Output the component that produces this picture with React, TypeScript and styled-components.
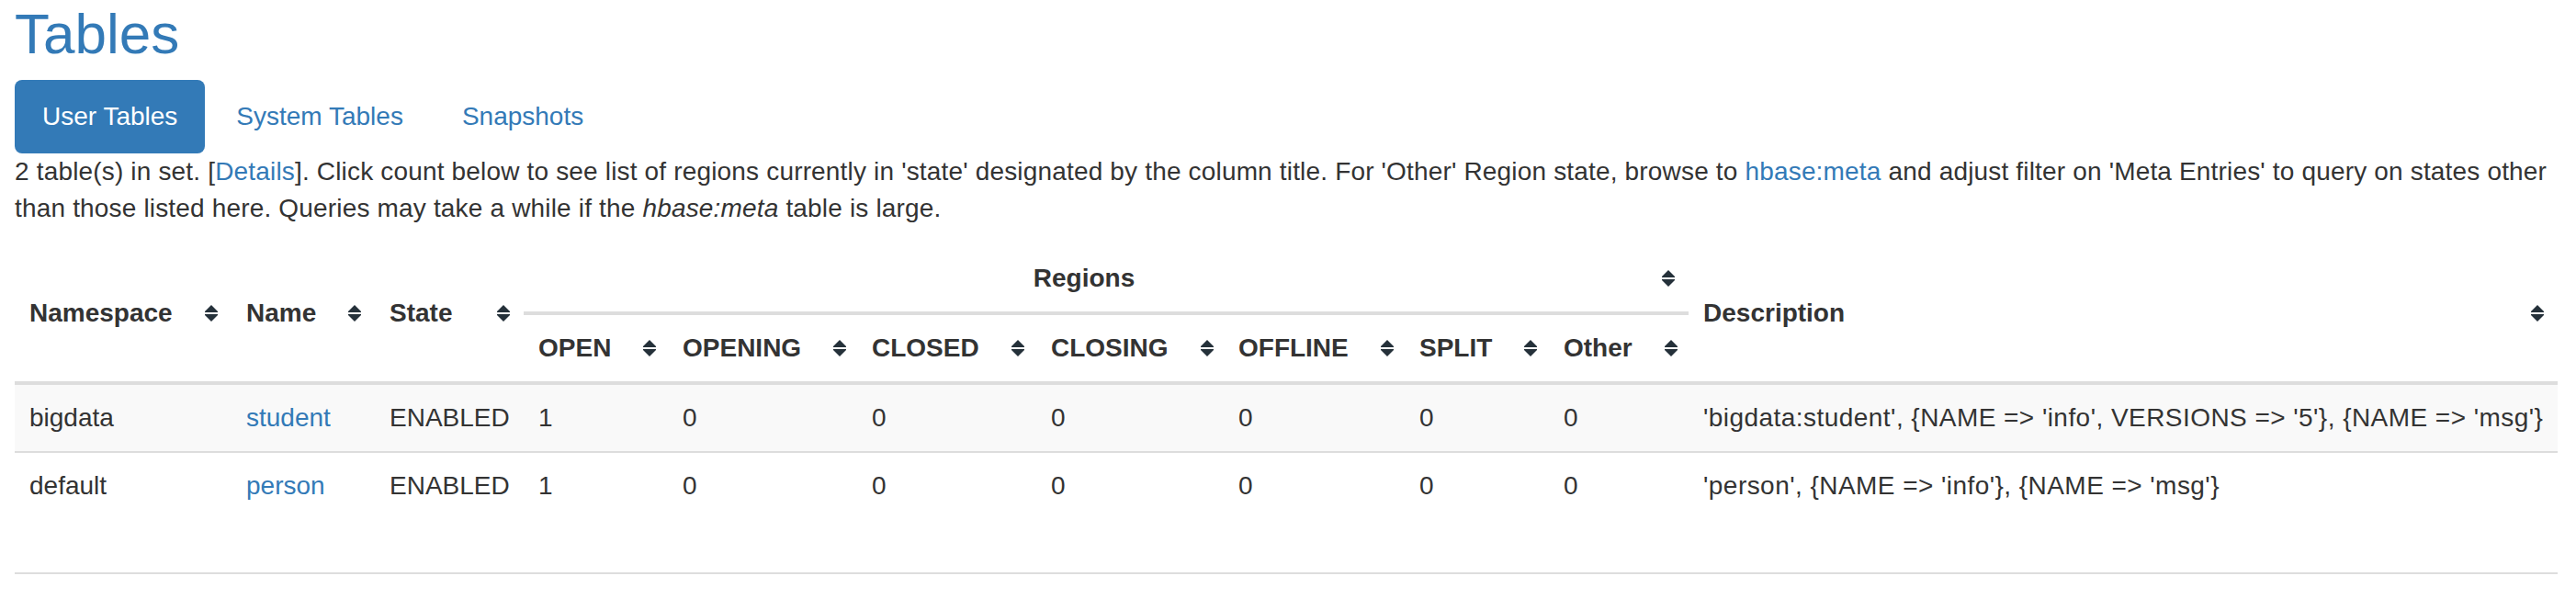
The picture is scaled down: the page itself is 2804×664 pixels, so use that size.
import React from 'react';
import styled, { createGlobalStyle } from 'styled-components';

const GlobalStyle = createGlobalStyle`
  body {
    margin: 0;
    background: #fff;
    color: #333;
    font-family: "Liberation Sans", Helvetica, Arial, sans-serif;
    font-size: 28px;
    line-height: 40px;
  }
`;

const Page = styled.div`
  padding: 4px 20px 0 16px;
`;

const Title = styled.h2`
  margin: 0 0 17px;
  font-size: 62px;
  font-weight: 400;
  line-height: 66px;
  color: #337ab7;
`;

const Pills = styled.ul`
  display: flex;
  gap: 4px;
  margin: 0;
  padding: 0;
  list-style: none;
`;

const Pill = styled.li<{ $active?: boolean }>`
  padding: 20px 30px;
  border-radius: 8px;
  line-height: 40px;
  background: ${(p) => (p.$active ? '#337ab7' : 'transparent')};
  color: ${(p) => (p.$active ? '#fff' : '#337ab7')};
`;

const Intro = styled.p`
  margin: 0 0 20px;
  letter-spacing: 0.17px;
`;

const Link = styled.a`
  color: #337ab7;
  text-decoration: none;
`;

const Table = styled.table`
  width: 100%;
  table-layout: fixed;
  border-collapse: collapse;
  border-spacing: 0;
`;

const Col = styled.col<{ $width: number }>`
  width: ${(p) => p.$width}px;
`;

const Th = styled.th`
  padding: 16px 14px 16px 16px;
  line-height: 40px;
  font-weight: 700;
  text-align: left;
  vertical-align: middle;
  border-bottom: 4px solid #ddd;
  white-space: nowrap;
`;

const HeadInner = styled.div`
  display: flex;
  align-items: center;
`;

const HeadText = styled.span<{ $center?: boolean }>`
  flex: 1;
  padding-right: 34px;
  text-align: ${(p) => (p.$center ? 'center' : 'left')};
`;

const Row = styled.tr<{ $striped?: boolean }>`
  background: ${(p) => (p.$striped ? '#f9f9f9' : 'transparent')};
`;

const Td = styled.td<{ $loose?: boolean }>`
  padding: 16px;
  line-height: 40px;
  vertical-align: top;
  border-top: 2px solid #ddd;
  white-space: nowrap;
  letter-spacing: ${(p) => (p.$loose ? '0.45px' : 'normal')};
`;

const Divider = styled.div`
  margin-top: 58px;
  border-top: 2px solid #ddd;
`;

// tablesorter style up/down arrows
const SortIcon = () => (
  <svg width="16" height="18" viewBox="0 0 16 18" style={{ flex: 'none' }}>
    <path d="M8 0 L15 7 V8 H1 V7 Z" fill="#25313a" />
    <path d="M1 10 H15 V11 L8 18 L1 11 Z" fill="#25313a" />
  </svg>
);

const HeadCell = ({
  label,
  center,
  rowSpan,
  colSpan,
}: {
  label: string;
  center?: boolean;
  rowSpan?: number;
  colSpan?: number;
}) => (
  <Th rowSpan={rowSpan} colSpan={colSpan}>
    <HeadInner>
      <HeadText $center={center}>{label}</HeadText>
      <SortIcon />
    </HeadInner>
  </Th>
);

const widths = [236, 156, 162, 157, 206, 195, 204, 197, 157, 152, 946];
const states = ['OPEN', 'OPENING', 'CLOSED', 'CLOSING', 'OFFLINE', 'SPLIT', 'Other'];

const tables = [
  {
    ns: 'bigdata',
    name: 'student',
    counts: [1, 0, 0, 0, 0, 0, 0],
    desc: "'bigdata:student', {NAME => 'info', VERSIONS => '5'}, {NAME => 'msg'}",
  },
  {
    ns: 'default',
    name: 'person',
    counts: [1, 0, 0, 0, 0, 0, 0],
    desc: "'person', {NAME => 'info'}, {NAME => 'msg'}",
  },
];

export default function App() {
  return (
    <Page>
      <GlobalStyle />
      <Title>Tables</Title>
      <Pills>
        <Pill $active>User Tables</Pill>
        <Pill>System Tables</Pill>
        <Pill>Snapshots</Pill>
      </Pills>
      <Intro>
        2 table(s) in set. [<Link href="#">Details</Link>]. Click count below to see list of
        regions currently in 'state' designated by the column title. For 'Other' Region state,
        browse to <Link href="#">hbase:meta</Link> and adjust filter on 'Meta Entries' to query on
        states other than those listed here. Queries may take a while if the <i>hbase:meta</i>{' '}
        table is large.
      </Intro>
      <Table>
        <colgroup>
          {widths.map((w, i) => (
            <Col key={i} $width={w} />
          ))}
        </colgroup>
        <thead>
          <tr>
            <HeadCell label="Namespace" rowSpan={2} />
            <HeadCell label="Name" rowSpan={2} />
            <HeadCell label="State" rowSpan={2} />
            <HeadCell label="Regions" colSpan={7} center />
            <HeadCell label="Description" rowSpan={2} />
          </tr>
          <tr>
            {states.map((s) => (
              <HeadCell key={s} label={s} />
            ))}
          </tr>
        </thead>
        <tbody>
          {tables.map((t, i) => (
            <Row key={t.name} $striped={i % 2 === 0}>
              <Td>{t.ns}</Td>
              <Td>
                <Link href="#">{t.name}</Link>
              </Td>
              <Td>ENABLED</Td>
              {t.counts.map((c, j) => (
                <Td key={j}>{c}</Td>
              ))}
              <Td $loose>{t.desc}</Td>
            </Row>
          ))}
        </tbody>
      </Table>
      <Divider />
    </Page>
  );
}
